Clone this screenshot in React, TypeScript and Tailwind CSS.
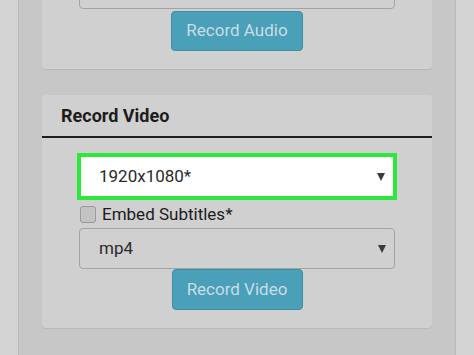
const font = { fontFamily: "Roboto, 'Liberation Sans', sans-serif" };

function Arrow() {
  return (
    <span className="h-0 w-0 border-x-[4px] border-t-[8px] border-x-transparent border-t-[#3a3a3a]" />
  );
}

export default function App() {
  return (
    <div
      className="flex h-[355px] w-[474px] overflow-hidden bg-[#d4d4d4] px-[18px]"
      style={font}
    >
      <div className="flex flex-1 flex-col border-x border-[#b9b9b9] bg-[#c7c7c7] px-[23px]">
        {/* Audio card, cut off at the top */}
        <div className="-mt-[50px] flex flex-col items-center rounded-[4px] bg-[#d0d0d0] pb-[18px] pt-[19px] shadow-[0_1px_1px_rgba(0,0,0,0.08)]">
          <div className="h-[40px] w-[316px] rounded-[4px] border border-[#a3a3a3]" />
          <button className="mt-[2px] h-[40px] w-[132px] rounded-[4px] border border-[#3f8ea6] bg-[#4a9fb9] text-[17px] text-[#c9dde4]">
            Record Audio
          </button>
        </div>

        {/* Video card */}
        <div className="mt-[26px] rounded-[4px] bg-[#d0d0d0] pb-[18px] shadow-[0_1px_1px_rgba(0,0,0,0.08)]">
          <div className="flex h-[43px] items-center border-b-2 border-[#1e1e1e] pl-[19px] text-[18px] font-bold text-[#1c1c1c]">
            Record Video
          </div>
          <div className="flex flex-col items-center pt-[15px]">
            <div className="flex h-[47px] w-[320px] items-center justify-between border-[4px] border-[#2ce83b] bg-white pl-[18px] pr-[8px] text-[17px] text-[#2a2a2a]">
              <span>1920x1080*</span>
              <Arrow />
            </div>
            <label className="mt-[3px] flex w-[316px] items-center gap-[6px] pl-[1px] text-[17px] text-[#1c1c1c]">
              <span className="h-[17px] w-[16px] rounded-[3px] border border-[#9a9a9a] bg-[#c3c3c3]" />
              <span className="leading-[22px]">Embed Subtitles*</span>
            </label>
            <div className="mt-[3px] flex h-[41px] w-[316px] items-center justify-between rounded-[4px] border border-[#a3a3a3] pl-[19px] pr-[8px] text-[17px] text-[#2a2a2a]">
              <span>mp4</span>
              <Arrow />
            </div>
            <button className="h-[41px] w-[131px] rounded-[4px] border border-[#3f8ea6] bg-[#4a9fb9] text-[17px] text-[#c9dde4]">
              Record Video
            </button>
          </div>
        </div>
      </div>
    </div>
  );
}
